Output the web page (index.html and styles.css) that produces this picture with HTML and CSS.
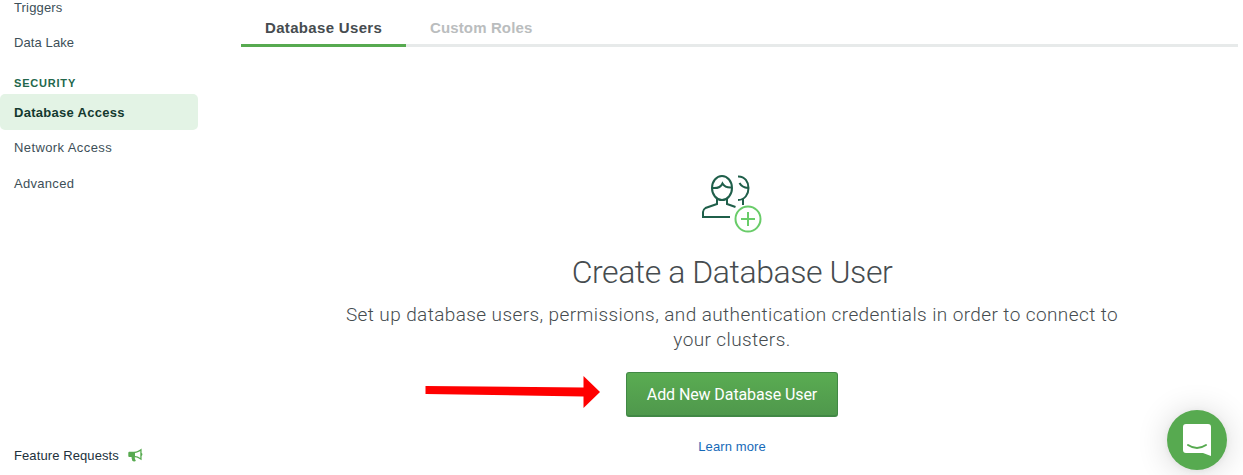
FILE: index.html
```
<!DOCTYPE html>
<html lang="en">
<head>
<meta charset="utf-8">
<title>Database Access</title>
<link rel="stylesheet" href="styles.css">
</head>
<body>
<div class="app">
  <nav class="sidebar">
    <a class="nav-item triggers"><span>Triggers</span></a>
    <a class="nav-item lake"><span>Data Lake</span></a>
    <h2 class="nav-heading"><span>Security</span></h2>
    <a class="nav-item active"><span>Database Access</span></a>
    <a class="nav-item network"><span>Network Access</span></a>
    <a class="nav-item advanced"><span>Advanced</span></a>
    <a class="feature"><span>Feature Requests</span>
      <svg width="15" height="14" viewBox="0 0 15 14"><path fill="#57aa50" fill-rule="evenodd" d="M13.6 0.6V5.1C14.7 5.4 14.7 7.5 13.6 7.9V12.3C11.5 10.5 9.4 9.4 7 9.2C6.3 9.8 7 10.8 7.3 11.2C6.8 11.9 7.7 12.3 8 12.7C7.2 13.7 5.1 13.6 4.3 12.8C4.1 11.5 3.3 10.4 3.6 9.1H1.6C.8 9.1.3 8.6.3 7.9V5.2C.3 4.3.8 3.8 1.6 3.8H6C8.9 3.8 11.3 2.5 13.6.6ZM12.3 3.1C10.6 4.3 8.8 4.9 7 5V8C8.9 8.2 10.7 8.8 12.3 10Z"/></svg>
    </a>
  </nav>
  <main class="content">
    <div class="tabs">
      <a class="tab selected"><span>Database Users</span></a>
      <a class="tab roles"><span>Custom Roles</span></a>
    </div>
    <section class="empty">
      <svg class="users-icon" width="62" height="60" viewBox="0 0 62 60" fill="none" stroke="#1f5f4a" stroke-width="2">
        <ellipse cx="21" cy="13" rx="10" ry="12"/>
        <path d="M11 13C16 13.5 20 12 21.5 8.500C23 11 26 13 31 12.500M16 24V29L4.500 33Q2 34.500 2 37V42H29M26 24V29L34.500 32M37 1.500C51 1 51 25 37 25M38.500 8Q41 12.500 47 13M42 24V30"/>
        <circle cx="47" cy="44" r="12.500" stroke="#69cc69"/>
        <path stroke="#69cc69" d="M40 44H54M47 37V51"/>
      </svg>
      <h1 class="title">Create a Database User</h1>
      <p class="description">Set up database users, permissions, and authentication credentials in order to connect to<br>your clusters.</p>
      <div class="action">
        <button class="primary"><span>Add New Database User</span></button>
        <svg class="pointer" width="176" height="34" viewBox="0 0 176 34"><path fill="#f00" d="M.5 11L158.500 12.500V1L175 17L158.500 33V21.500L.5 19Z"/></svg>
      </div>
      <a class="learn">Learn more</a>
    </section>
  </main>
  <button class="chat" aria-label="Open chat">
    <svg width="28" height="33" viewBox="0 0 28 33"><path fill="#fff" d="M3 0H25Q28 0 28 3V32L20 29H3Q0 29 0 26V3Q0 0 3 0Z"/><path d="M5 21Q14 27 23 21" fill="none" stroke="#57aa50" stroke-width="2" stroke-linecap="round"/></svg>
  </button>
</div>
</body>
</html>
```
FILE: styles.css
```
* { box-sizing: border-box; }
body { margin: 0; background: #fff; font-family: "Liberation Sans", Arial, sans-serif; color: #464c4f; }
.app { display: flex; height: 475px; overflow: hidden; }
.sidebar { width: 198px; height: 475px; display: flex; flex-direction: column; flex-shrink: 0; }
.nav-item { height: 35px; padding-left: 14px; flex-shrink: 0; line-height: 35px; font-size: 13px; color: #3d4f58; letter-spacing: 0.3px; }
.triggers { margin-top: -10px; letter-spacing: 0.15px; }
.lake { letter-spacing: 0.1px; }
.network { letter-spacing: 0.4px; }
.nav-heading { margin: 16px 0 0; height: 18px; padding-left: 14px; line-height: 15px; font-size: 11px; letter-spacing: 0.8px; text-transform: uppercase; color: #23674c; }
.active { height: 36px; line-height: 37px; background: #e3f3e5; border-radius: 5px; font-weight: bold; color: #13392f; letter-spacing: 0.28px; }
.advanced { height: 37px; line-height: 37px; }
.feature { display: flex; align-items: center; gap: 9px; height: 20px; margin: auto 0 10px; padding-left: 14px; font-size: 13px; letter-spacing: 0.1px; color: #21313c; white-space: nowrap; }
.content { width: 997px; margin-left: 43px; }
.tabs { display: flex; height: 47px; border-bottom: 3px solid #e7eaea; }
.tab { height: 47px; padding: 18px 24px 0; line-height: 20px; font-size: 15px; font-weight: bold; letter-spacing: 0.33px; color: #babdbe; white-space: nowrap; }
.roles { letter-spacing: 0.13px; }
.selected { width: 165px; border-bottom: 3px solid #57aa50; color: #464c4f; }
.empty { display: flex; flex-direction: column; align-items: center; padding: 127px 15px 0 0; }
.users-icon { display: block; margin-top: 1px; }
.title { margin: 17px 0 0; height: 40px; font: 300 32px/40px Roboto, sans-serif; letter-spacing: -0.43px; white-space: nowrap; }
.description { margin: 10px 0 0; font: 300 19px/25px Roboto, sans-serif; letter-spacing: 0.4px; text-align: center; white-space: nowrap; }
.action { position: relative; margin-top: 20px; }
.primary { display: block; width: 212px; height: 45px; padding: 0; border: 1px solid #418845; border-bottom-width: 2px; border-radius: 3px; background: linear-gradient(#5aac52, #4f984c); color: #fff; font: 400 16px/44px Roboto, sans-serif; letter-spacing: -0.1px; white-space: nowrap; }
.pointer { position: absolute; left: -201px; top: 3px; }
.learn { margin-top: 20px; line-height: 20px; font-size: 13px; letter-spacing: 0.1px; color: #1669b8; }
.chat { position: absolute; left: 1167px; top: 410px; width: 60px; height: 60px; padding: 1px 0 0; border: 0; border-radius: 50%; background: #57aa50; box-shadow: 0 1px 6px rgba(0,0,0,.06), 0 2px 32px rgba(0,0,0,.16); display: flex; align-items: center; justify-content: center; }
```
